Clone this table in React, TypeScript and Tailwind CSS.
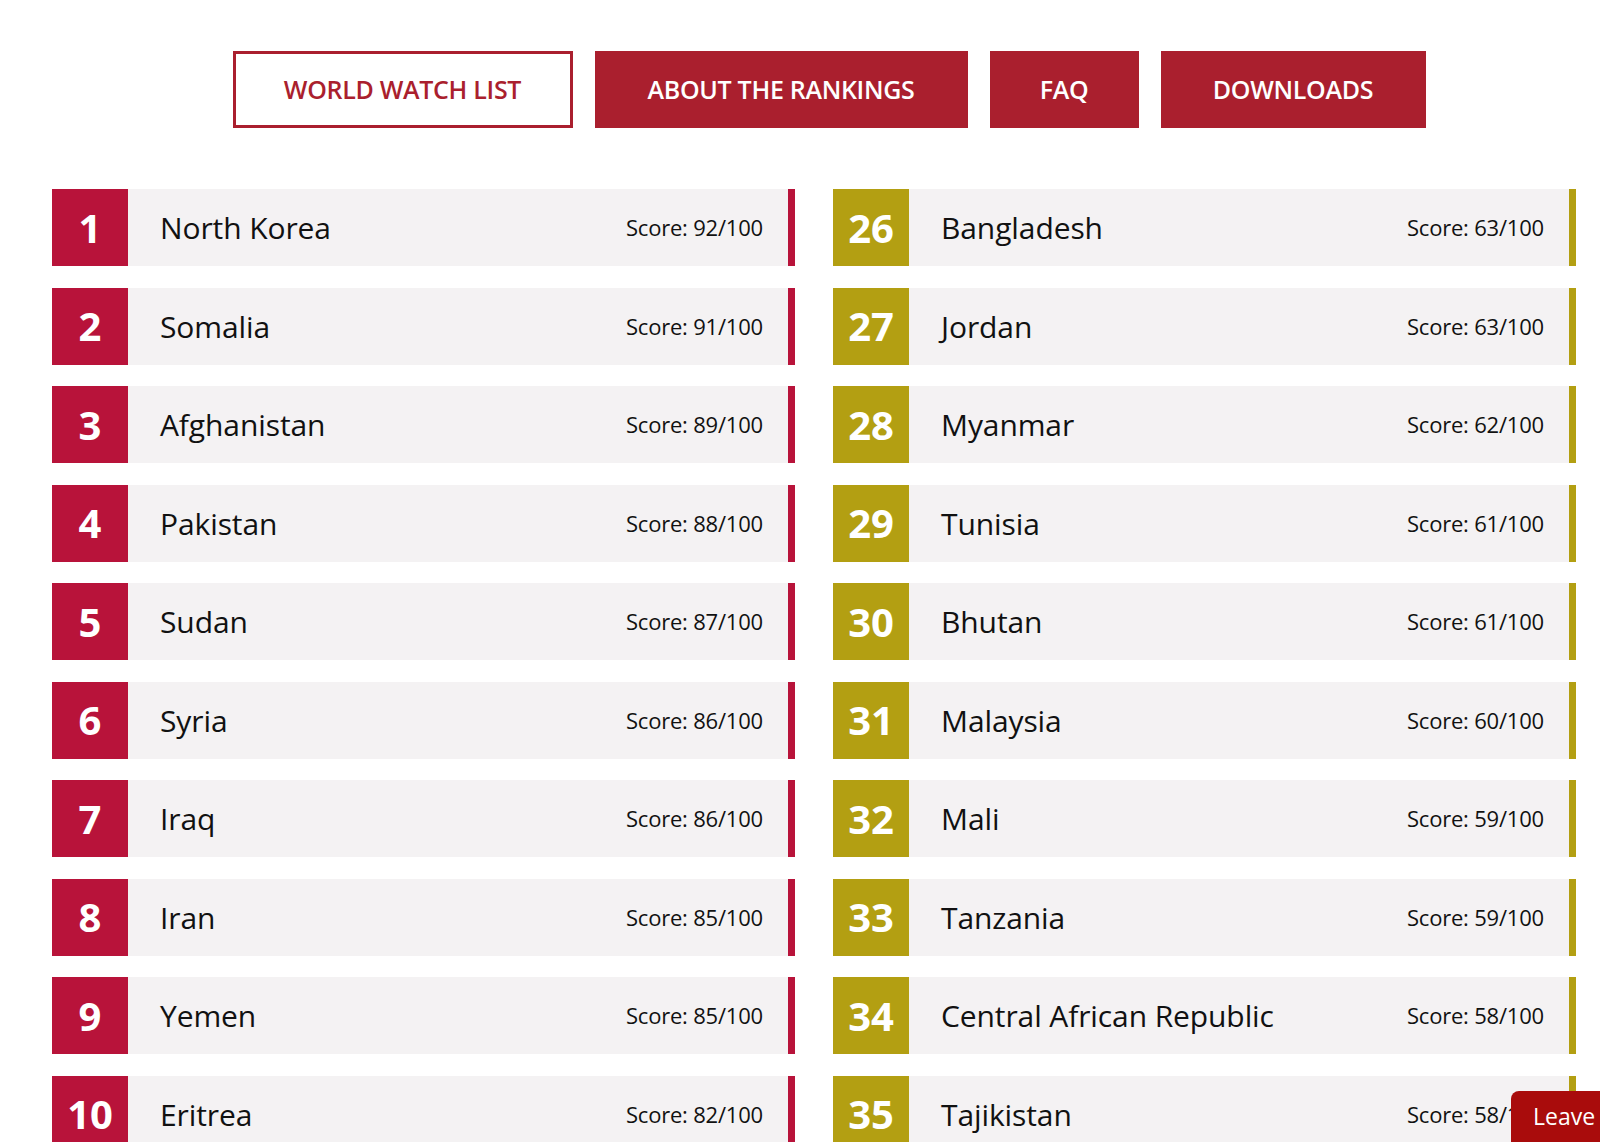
import React from "react";

interface Country {
  rank: number;
  name: string;
  score: number;
}

const left: Country[] = [
  { rank: 1, name: "North Korea", score: 92 },
  { rank: 2, name: "Somalia", score: 91 },
  { rank: 3, name: "Afghanistan", score: 89 },
  { rank: 4, name: "Pakistan", score: 88 },
  { rank: 5, name: "Sudan", score: 87 },
  { rank: 6, name: "Syria", score: 86 },
  { rank: 7, name: "Iraq", score: 86 },
  { rank: 8, name: "Iran", score: 85 },
  { rank: 9, name: "Yemen", score: 85 },
  { rank: 10, name: "Eritrea", score: 82 },
];

const right: Country[] = [
  { rank: 26, name: "Bangladesh", score: 63 },
  { rank: 27, name: "Jordan", score: 63 },
  { rank: 28, name: "Myanmar", score: 62 },
  { rank: 29, name: "Tunisia", score: 61 },
  { rank: 30, name: "Bhutan", score: 61 },
  { rank: 31, name: "Malaysia", score: 60 },
  { rank: 32, name: "Mali", score: 59 },
  { rank: 33, name: "Tanzania", score: 59 },
  { rank: 34, name: "Central African Republic", score: 58 },
  { rank: 35, name: "Tajikistan", score: 58 },
];

const tabs = [
  { label: "WORLD WATCH LIST", width: "w-[340px]", active: true },
  { label: "ABOUT THE RANKINGS", width: "w-[373px]", active: false },
  { label: "FAQ", width: "w-[149px]", active: false },
  { label: "DOWNLOADS", width: "w-[265px]", active: false },
];

const Row: React.FC<{ country: Country; extreme: boolean }> = ({ country, extreme }) => (
  <div
    className={`flex h-[77px] border-r-[7px] ${
      extreme ? "border-[#b8133a]" : "border-[#b39f12]"
    }`}
  >
    <div
      className={`flex w-[76px] shrink-0 items-center justify-center text-[40px] font-bold text-white ${
        extreme ? "bg-[#b8133a]" : "bg-[#b39f12]"
      }`}
    >
      {country.rank}
    </div>
    <div className="flex flex-1 items-center justify-between bg-[#f4f2f3] pl-[32px] pr-[25px] text-[#111]">
      <span className="text-[30px] tracking-[-0.1px]">{country.name}</span>
      <span className="text-[22px] tracking-[-0.2px]">Score: {country.score}/100</span>
    </div>
  </div>
);

export default function App() {
  return (
    <div
      className="relative h-[1142px] overflow-hidden bg-white"
      style={{ fontFamily: '"Open Sans", "Liberation Sans", sans-serif' }}
    >
      <nav className="flex justify-center gap-[22px] pl-[58px] pt-[51px]">
        {tabs.map((tab) => (
          <div
            key={tab.label}
            className={`flex h-[77px] items-center justify-center text-[25px] font-semibold tracking-[-0.3px] ${tab.width} ${
              tab.active
                ? "border-[3px] border-[#aa1f2e] bg-white text-[#aa1f2e]"
                : "bg-[#aa1f2e] text-white"
            }`}
          >
            {tab.label}
          </div>
        ))}
      </nav>

      <div className="mt-[61px] grid grid-cols-2 gap-x-[38px] pl-[52px] pr-[24px]">
        <div className="flex flex-col gap-[21.5px]">
          {left.map((c) => (
            <Row key={c.rank} country={c} extreme />
          ))}
        </div>
        <div className="flex flex-col gap-[21.5px]">
          {right.map((c) => (
            <Row key={c.rank} country={c} extreme={false} />
          ))}
        </div>
      </div>

      <div className="fixed bottom-0 right-0 flex h-[51px] w-[89px] items-center justify-start rounded-tl-[8px] bg-[#a90c0c] pl-[22px] text-[23px] text-white">
        Leave
      </div>
    </div>
  );
}
